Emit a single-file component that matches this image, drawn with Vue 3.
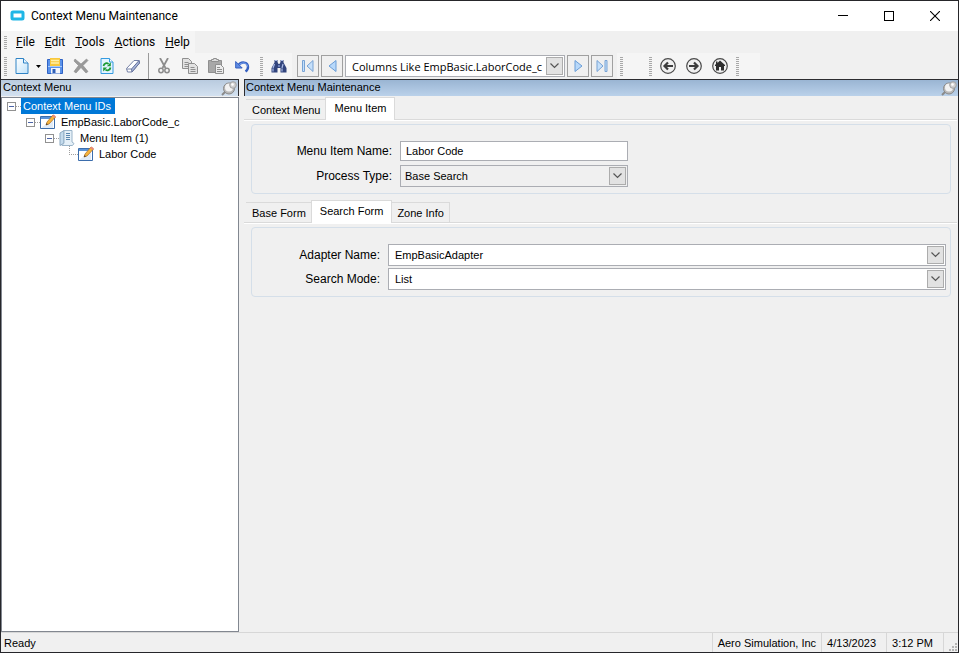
<script setup>
import { ref } from "vue";

const menus = ["File", "Edit", "Tools", "Actions", "Help"];

const nodes = [
  { depth: 0, label: "Context Menu IDs", open: true, icon: "" },
  { depth: 1, label: "EmpBasic.LaborCode_c", open: true, icon: "form" },
  { depth: 2, label: "Menu Item (1)", open: true, icon: "list" },
  { depth: 3, label: "Labor Code", open: false, icon: "form" },
];

const selected = ref("Context Menu IDs");
const mainTab = ref("Menu Item");
const subTab = ref("Search Form");
const menuItemName = ref("Labor Code");
</script>

<template>
  <div class="window">
    <header class="titlebar">
      <svg class="logo" width="15" height="12" viewBox="0 0 15 12">
        <rect x="2" y="2" width="11" height="7" rx="1" fill="#fff" stroke="#1fb6e6" stroke-width="3" />
      </svg>
      <h1>Context Menu Maintenance</h1>
      <div class="window-buttons">
        <button aria-label="Minimize">
          <svg width="10" height="10"><path d="M0 4.500h10" stroke="#000" /></svg>
        </button>
        <button aria-label="Maximize">
          <svg width="10" height="10"><rect x=".5" y=".5" width="9" height="9" fill="none" stroke="#000" /></svg>
        </button>
        <button aria-label="Close">
          <svg width="10" height="10"><path d="M0 0l10 10M10 0L0 10" stroke="#000" stroke-width="1.100" /></svg>
        </button>
      </div>
    </header>

    <nav class="menubar">
      <div class="strip">
        <span class="grip"></span>
        <button v-for="m in menus" :key="m"><u>{{ m[0] }}</u>{{ m.slice(1) }}</button>
      </div>
    </nav>

    <div class="toolbar">
      <div class="strip">
        <span class="grip"></span>
        <button class="tool new" aria-label="New">
          <svg width="14" height="16" viewBox="0 0 14 16">
            <defs>
              <linearGradient id="page" x1="0" y1="0" x2="1" y2="1">
                <stop offset="0" stop-color="#fff" />
                <stop offset="1" stop-color="#bfe2fa" />
              </linearGradient>
            </defs>
            <path d="M1 .5h7.500l4.500 4.500v10.500H1z" fill="url(#page)" stroke="#2f83c5" />
            <path d="M8.500 .5V5H13" fill="#e8f6ff" stroke="#2f83c5" />
          </svg>
        </button>
        <button class="drop" aria-label="New options">
          <svg width="5" height="3"><path d="M0 0h5L2.500 3z" fill="#000" /></svg>
        </button>
        <button class="tool" aria-label="Save">
          <svg width="16" height="16" viewBox="0 0 16 16">
            <path d="M.5 1.500h15v14H.5z" fill="#5a92ea" stroke="#2f62c4" />
            <path d="M3 0h10v8H3z" fill="#f9c83c" />
            <path d="M4 2.500h8M4 5h8" stroke="#fff0a8" stroke-width="1.500" />
            <path d="M1 8.500h14" stroke="#a9ccfb" />
            <path d="M4 10h9v5.500H4z" fill="#f4f6fb" />
            <path d="M5.500 11h3v4h-3z" fill="#2f5fb8" />
          </svg>
        </button>
        <button class="tool" aria-label="Delete">
          <svg width="16" height="16" viewBox="0 0 16 16">
            <path d="M2 1l6 5L13.500 1 15 2.500 10 7.500l5 6-2 1.500-5-5.500-5 5.500-2-1.500 4.500-6L1 3z" fill="#9a9a9a" stroke="#8a8a8a" stroke-width=".6" />
          </svg>
        </button>
        <button class="tool" aria-label="Refresh">
          <svg width="14" height="16" viewBox="0 0 14 16">
            <path d="M1 .5h8.500L13 4v11.500H1z" fill="#e4f4ff" stroke="#359be0" />
            <path d="M9.500 .5V4H13" fill="#fff" stroke="#359be0" />
            <path d="M3.500 8c.5-3 3.500-3.600 5-2" fill="none" stroke="#1c9a35" stroke-width="1.800" />
            <path d="M10.800 4.300v4H6.900z" fill="#1c9a35" />
            <path d="M10.500 9.500c-.5 3-3.500 3.600-5 2" fill="none" stroke="#1c9a35" stroke-width="1.800" />
            <path d="M3.200 13.400v-4h3.900z" fill="#1c9a35" />
          </svg>
        </button>
        <button class="tool" aria-label="Clear">
          <svg width="16" height="16" viewBox="0 0 16 16">
            <path d="M1.500 10.500L9 2.500h5L14.500 5 7 14H2.500z" fill="#fff" stroke="#7581a6" />
            <path d="M7 14L14.500 5 14 2.500 6.500 11z" fill="#a9b6da" stroke="#65729c" />
            <path d="M1.500 11h5" stroke="#7581a6" />
          </svg>
        </button>
        <span class="separator"></span>
        <button class="tool" aria-label="Cut">
          <svg width="14" height="16" viewBox="0 0 14 16" fill="none" stroke="#8c8c8c">
            <path d="M3 0l5.500 10M11 0L5.500 10" stroke-width="1.800" />
            <circle cx="4" cy="12.500" r="2.200" stroke-width="1.500" />
            <circle cx="10" cy="12.500" r="2.200" stroke-width="1.500" />
          </svg>
        </button>
        <button class="tool" aria-label="Copy">
          <svg width="16" height="16" viewBox="0 0 16 16" fill="#e2e2e2" stroke="#8f8f8f">
            <path d="M.5 .5h6l3 3v7h-9z" />
            <path d="M2.500 4.500h4M2.500 6.500h5M2.500 8.500h5" />
            <path d="M6.500 5.500h6l3 3v7h-9z" />
            <path d="M8.500 9.500h4M8.500 11.500h5M8.500 13.500h5" />
          </svg>
        </button>
        <button class="tool" aria-label="Paste">
          <svg width="16" height="16" viewBox="0 0 16 16" stroke="#8f8f8f">
            <path d="M.5 2.500h13v12H.5z" fill="#a8a8a8" />
            <path d="M3.500 3.500v-2h2v-1h3v1h2v2z" fill="#dedede" />
            <path d="M7.500 6.500h5l3 3v6h-8z" fill="#ececec" />
            <path d="M9 9.500h3M9 11.500h5M9 13.500h5" />
          </svg>
        </button>
        <button class="tool" aria-label="Undo">
          <svg width="15" height="14" viewBox="0 0 15 14">
            <path d="M3 7c3-5.500 10-4 10 1 0 2-1 3.500-2.500 4.500" fill="none" stroke="#3660c0" stroke-width="2.400" />
            <path d="M3.500 6.500c3-4 9-3 9 1" fill="none" stroke="#7ba5f2" />
            <path d="M.7 2.500v6.500h6.500z" fill="#5d8ae2" stroke="#3660c0" />
          </svg>
        </button>
      </div>
      <div class="strip find">
        <span class="grip"></span>
        <button class="tool" aria-label="Search">
          <svg width="16" height="14" viewBox="0 0 16 14">
            <path d="M3.500 1h3v2l1 2h1l1-2V1h3v2.500L15.500 9v4.500h-6V9h-3v4.500h-6V9l3-5.500z" fill="#32457d" />
            <path d="M4 1.500h2M10 1.500h2M3.500 5L2 9M12 5l-1 4M2 9.500v3M11 9.500v3" stroke="#a9bae6" stroke-width="1.200" />
            <path d="M7 6h2v2H7z" fill="#6b7fb8" />
          </svg>
        </button>
      </div>
      <div class="navigator">
        <button class="nav-button" aria-label="First">
          <svg width="12" height="14" viewBox="0 0 12 14" fill="#c5e0fb" stroke="#78a3d4">
            <path d="M.5 1.500h2v11h-2zM11 1.500v11L5 7z" />
          </svg>
        </button>
        <button class="nav-button" aria-label="Previous">
          <svg width="9" height="14" viewBox="0 0 9 14" fill="#b7d8fa" stroke="#6a9dd6"><path d="M8 1.500v11L1 7z" /></svg>
        </button>
        <div class="combo record">
          <select aria-label="Record">
            <option>Columns Like EmpBasic.LaborCode_c</option>
          </select>
          <span class="arrow"><svg width="9" height="6"><path d="M.5 .5l4 4 4-4" /></svg></span>
        </div>
        <button class="nav-button" aria-label="Next">
          <svg width="9" height="14" viewBox="0 0 9 14" fill="#b7d8fa" stroke="#6a9dd6"><path d="M1 1.500v11l7-5.500z" /></svg>
        </button>
        <button class="nav-button" aria-label="Last">
          <svg width="12" height="14" viewBox="0 0 12 14" fill="#c5e0fb" stroke="#78a3d4">
            <path d="M9 1.500h2v11H9zM1 1.500v11l6-5.500z" />
          </svg>
        </button>
      </div>
      <div class="strip links">
        <span class="grip"></span>
        <span class="gap"></span>
        <span class="grip"></span>
        <button class="tool" aria-label="Back">
          <svg width="16" height="16" viewBox="0 0 16 16">
            <circle cx="8" cy="8" r="7.300" fill="#f0f0f0" stroke="#4a4a4a" stroke-width="1.200" />
            <path d="M13 8H5M8 4.500L4.500 8 8 11.500" fill="none" stroke="#3c3c3c" stroke-width="2.200" />
          </svg>
        </button>
        <button class="tool" aria-label="Forward">
          <svg width="16" height="16" viewBox="0 0 16 16">
            <circle cx="8" cy="8" r="7.300" fill="#f0f0f0" stroke="#4a4a4a" stroke-width="1.200" />
            <path d="M3 8h8M8 4.500l3.500 3.500L8 11.500" fill="none" stroke="#3c3c3c" stroke-width="2.200" />
          </svg>
        </button>
        <button class="tool" aria-label="Home">
          <svg width="16" height="16" viewBox="0 0 16 16">
            <circle cx="8" cy="8" r="7.300" fill="#f0f0f0" stroke="#4a4a4a" stroke-width="1.200" />
            <path d="M8 2.500L13 7v1h-1v4.500H9V9H7v3.500H4V8H3V7l1-1V3.500h1.500V5z" fill="#2e2e2e" />
          </svg>
        </button>
        <span class="grip"></span>
      </div>
    </div>

    <main class="body">
      <aside class="tree-panel">
        <div class="panel-header">
          <h2>Context Menu</h2>
          <button class="pin" aria-label="Pin tree">
            <svg width="16" height="15" viewBox="0 0 16 15">
              <path d="M1 14l4-4" stroke="#8a8a8a" stroke-width="2" />
              <ellipse cx="8" cy="7.500" rx="5.500" ry="5.500" fill="#b9b9b9" stroke="#8a8a8a" />
              <circle cx="8" cy="6.500" r="4" fill="#f2f2f2" />
              <circle cx="12" cy="4" r="3.300" fill="#d0d0d0" stroke="#a2a2a2" />
              <circle cx="11.500" cy="3.500" r="1.300" fill="#fff" />
            </svg>
          </button>
        </div>
        <ul class="tree">
          <li v-for="n in nodes" :key="n.label" :class="'depth-' + n.depth">
            <span v-if="n.open" class="expander"></span>
            <span v-else class="elbow"></span>
            <span v-if="n.open" class="dots"></span>
            <svg v-if="n.icon === 'form'" width="16" height="16" viewBox="0 0 16 16">
              <path d="M.5 2.500h14v12H.5z" fill="#fff" stroke="#3b6dac" />
              <path d="M1 3h13v2H1z" fill="#5a93d8" />
              <path d="M2 13l11-7v8H2z" fill="#e0ebf7" />
              <path d="M6 11l1-3 6-7 2.500 2-6.500 7z" fill="#f7b43a" stroke="#a96c24" stroke-width=".7" />
              <path d="M12 2l1.500-1.500L16 2.500 14.500 4z" fill="#e98b78" />
              <path d="M6 11l.6-1.800 1.400 1z" fill="#333" />
            </svg>
            <svg v-if="n.icon === 'list'" width="16" height="16" viewBox="0 0 16 16">
              <path d="M1 3l4-2.500V13l-4 2.500z" fill="#c4dbed" stroke="#8ba8c0" />
              <path d="M5 .5h8V12l2 1.500-1.500 2H3L5 13z" fill="#e5f0f8" stroke="#9ab4c9" />
              <path d="M7 3.500h4M7 5.500h4M7 7.500h4M7 9.500h4" stroke="#5b87af" />
            </svg>
            <button class="node" :class="{ selected: selected === n.label }" @click="selected = n.label">{{ n.label }}</button>
          </li>
        </ul>
      </aside>

      <section class="detail">
        <div class="panel-header active">
          <h2>Context Menu Maintenance</h2>
          <button class="pin" aria-label="Pin detail">
            <svg width="16" height="15" viewBox="0 0 16 15">
              <path d="M1 14l4-4" stroke="#8a8a8a" stroke-width="2" />
              <ellipse cx="8" cy="7.500" rx="5.500" ry="5.500" fill="#b9b9b9" stroke="#8a8a8a" />
              <circle cx="8" cy="6.500" r="4" fill="#f2f2f2" />
              <circle cx="12" cy="4" r="3.300" fill="#d0d0d0" stroke="#a2a2a2" />
              <circle cx="11.500" cy="3.500" r="1.300" fill="#fff" />
            </svg>
          </button>
        </div>

        <div class="tabs" role="tablist">
          <button
            v-for="t in ['Context Menu', 'Menu Item']"
            :key="t"
            role="tab"
            :aria-selected="mainTab === t"
            :class="{ current: mainTab === t }"
            @click="mainTab = t"
          >{{ t }}</button>
        </div>
        <div class="group item">
          <label for="item-name">Menu Item Name:</label>
          <input id="item-name" v-model="menuItemName" type="text" />
          <label for="process-type">Process Type:</label>
          <div class="combo readonly">
            <select id="process-type">
              <option>Base Search</option>
            </select>
            <span class="arrow"><svg width="9" height="6"><path d="M.5 .5l4 4 4-4" /></svg></span>
          </div>
        </div>

        <div class="tabs sub" role="tablist">
          <button
            v-for="t in ['Base Form', 'Search Form', 'Zone Info']"
            :key="t"
            role="tab"
            :aria-selected="subTab === t"
            :class="{ current: subTab === t }"
            @click="subTab = t"
          >{{ t }}</button>
        </div>
        <div class="group search">
          <label for="adapter">Adapter Name:</label>
          <div class="combo">
            <select id="adapter">
              <option>EmpBasicAdapter</option>
            </select>
            <span class="arrow"><svg width="9" height="6"><path d="M.5 .5l4 4 4-4" /></svg></span>
          </div>
          <label for="mode">Search Mode:</label>
          <div class="combo">
            <select id="mode">
              <option>List</option>
            </select>
            <span class="arrow"><svg width="9" height="6"><path d="M.5 .5l4 4 4-4" /></svg></span>
          </div>
        </div>
      </section>
    </main>

    <footer class="statusbar">
      <span class="state">Ready</span>
      <span class="cell">Aero Simulation, Inc</span>
      <span class="cell clock">4/13/2023</span>
      <span class="cell clock">3:12 PM</span>
      <span class="cell corner">
        <svg width="9" height="9" fill="#b5b5b5">
          <path d="M6 0h2v2H6zM3 3h2v2H3zM6 3h2v2H6zM0 6h2v2H0zM3 6h2v2H3zM6 6h2v2H6z" />
        </svg>
      </span>
    </footer>
  </div>
</template>

<style>
body {
  margin: 0;
  background: #f0f0f0;
}
</style>

<style scoped>
.window {
  display: flex;
  flex-direction: column;
  min-height: 100vh;
  box-sizing: border-box;
  border: 1px solid #26262a;
  background: #f0f0f0;
  color: #000;
  font-family: "Liberation Sans", Arial, sans-serif;
  font-size: 11px;
}

button,
input,
select {
  margin: 0;
  padding: 0;
  border: 0;
  border-radius: 0;
  background: none;
  color: inherit;
  font: inherit;
}

svg {
  display: block;
  flex: none;
}

h1,
h2 {
  margin: 0;
  font-size: 11px;
  font-weight: normal;
}

/* title bar */
.titlebar {
  display: flex;
  align-items: center;
  height: 30px;
  padding-left: 9px;
  background: #fff;
}

.titlebar h1 {
  flex: 1;
  padding-left: 6px;
  font-family: Roboto, "Noto Sans", sans-serif;
  font-size: 12px;
}

.window-buttons {
  display: flex;
}

.window-buttons button {
  display: flex;
  align-items: center;
  justify-content: center;
  width: 46px;
  height: 30px;
}

/* menu and toolbars */
.menubar,
.toolbar {
  display: flex;
  font-family: Roboto, "Noto Sans", sans-serif;
  font-size: 12px;
}

.strip {
  display: flex;
  align-items: center;
  background: #f5f5f5;
}

.menubar .strip {
  height: 22px;
}

.menubar button {
  padding: 0 5px;
}

.grip {
  width: 3px;
  height: 19px;
  margin: 0 3px;
  background: repeating-linear-gradient(#a8a8a8 0 1px, #f5f5f5 1px 2px);
}

.menubar .grip {
  height: 13px;
  margin-right: 4px;
}

.toolbar {
  height: 26px;
}

.tool {
  display: flex;
  align-items: center;
  justify-content: center;
  width: 26px;
  height: 26px;
}

.tool.new {
  width: 24px;
}

.drop {
  display: flex;
  justify-content: center;
  width: 8px;
}

.separator {
  width: 1px;
  height: 26px;
  margin: 0 2px;
  background: #9a9a9a;
}

.find {
  padding-left: 2px;
}

.navigator {
  display: flex;
  align-items: center;
  gap: 2px;
  padding: 0 4px 0 5px;
}

.nav-button {
  display: flex;
  align-items: center;
  justify-content: center;
  width: 22px;
  height: 22px;
  border: 1px solid #a0a0a0;
}

.links .gap {
  width: 20px;
}

.links {
  padding-right: 18px;
}

/* drop-downs */
.combo {
  position: relative;
  box-sizing: border-box;
  height: 22px;
  border: 1px solid #abadb3;
  background: #fff;
}

.combo select {
  appearance: none;
  width: 100%;
  height: 20px;
  padding: 0 18px 0 6px;
}

.combo.record {
  width: 220px;
  font-family: "Open Sans", "Noto Sans", sans-serif;
  font-size: 11px;
}

.combo.readonly {
  background: #f0f0f0;
}

.combo.readonly select {
  padding-left: 4px;
}

.arrow {
  position: absolute;
  top: 1px;
  right: 1px;
  display: flex;
  align-items: center;
  justify-content: center;
  box-sizing: border-box;
  width: 17px;
  height: 18px;
  border: 1px solid #acacac;
  background: #e2e2e2;
  pointer-events: none;
}

.arrow path {
  fill: none;
  stroke: #555;
  stroke-width: 1.2;
}

/* panels */
.body {
  display: flex;
  flex: 1;
  gap: 5px;
}

.tree-panel {
  display: flex;
  flex-direction: column;
  width: 25%;
  max-width: 238px;
}

.panel-header {
  display: flex;
  align-items: center;
  justify-content: space-between;
  box-sizing: border-box;
  height: 17px;
  padding: 0 1px 0 2px;
  border-top: 1px solid #2c2c30;
  border-right: 1px solid #2c2c30;
  background: linear-gradient(#b9cbdf, #d3e1f0);
}

.panel-header h2 {
  height: 16px;
  line-height: 14px;
}

.panel-header.active {
  padding: 0 1px;
  border-left: 1px solid #2c2c30;
  border-right: 0;
  background: linear-gradient(#9ab5d3, #bad1ea);
}

.tree {
  flex: 1;
  box-sizing: border-box;
  margin: 1px 0 0;
  padding: 0 0 0 5px;
  border: 1px solid #828790;
  background: #fff;
  list-style: none;
}

.tree li {
  display: flex;
  align-items: center;
  height: 16px;
}

.depth-1 {
  padding-left: 19px;
}

.depth-2 {
  padding-left: 38px;
}

.depth-3 {
  padding-left: 57px;
}

.expander {
  box-sizing: border-box;
  width: 9px;
  height: 9px;
  border: 1px solid #919191;
  background: linear-gradient(#4b63a7, #4b63a7) center / 5px 1px no-repeat #fff;
}

.dots {
  width: 5px;
  border-top: 1px dotted #a0a0a0;
}

.elbow {
  align-self: flex-start;
  width: 8px;
  height: 8px;
  margin-left: 5px;
  border-left: 1px dotted #a0a0a0;
  border-bottom: 1px dotted #a0a0a0;
}

.node {
  height: 16px;
  margin-left: 3px;
  padding: 0 4px 0 2px;
  white-space: nowrap;
}

.depth-0 .node {
  margin-left: 0;
}

.node.selected {
  background: #0078d7;
  color: #fff;
}

.detail {
  flex: 1;
  min-width: 0;
}

.tabs {
  display: flex;
  align-items: flex-end;
  height: 23px;
  margin: 1px 1px 0 0;
  padding-left: 2px;
  border-bottom: 1px solid #fff;
  box-shadow: inset 0 -1px #dadada;
}

.tabs button {
  box-sizing: border-box;
  height: 21px;
  padding: 0 5px;
  border: 1px solid #dadada;
  border-left: 0;
}

.tabs button:first-child {
  padding-left: 6px;
  border-right: 0;
}

.tabs button.current {
  height: 23px;
  padding: 0 8px 2px;
  border: 1px solid #dadada;
  border-bottom: 0;
  background: #fff;
}

.tabs.sub {
  margin-top: 6px;
}

.group {
  display: grid;
  align-items: center;
  row-gap: 2px;
  column-gap: 8px;
  margin: 3px 7px 0;
  padding: 16px 4px 6px 0;
  border: 1px solid #d5dfe9;
  border-radius: 4px;
}

.group label {
  text-align: right;
  font-size: 12px;
}

.item {
  grid-template-columns: 140px 228px;
  row-gap: 4px;
}

.item input {
  box-sizing: border-box;
  height: 20px;
  padding: 0 5px;
  border: 1px solid #abadb3;
  background: #fff;
}

.search {
  grid-template-columns: 128px 1fr;
}

/* status bar */
.statusbar {
  display: flex;
  align-items: center;
  height: 19px;
  padding-left: 3px;
  border-top: 1px solid #d7d7d7;
}

.state {
  flex: 1;
}

.cell {
  box-sizing: border-box;
  height: 19px;
  padding: 0 5px;
  border-left: 1px solid #d7d7d7;
  line-height: 20px;
}

.clock {
  padding-right: 10px;
}

.corner {
  display: flex;
  align-items: flex-end;
  padding: 0 0 0 5px;
}
</style>
